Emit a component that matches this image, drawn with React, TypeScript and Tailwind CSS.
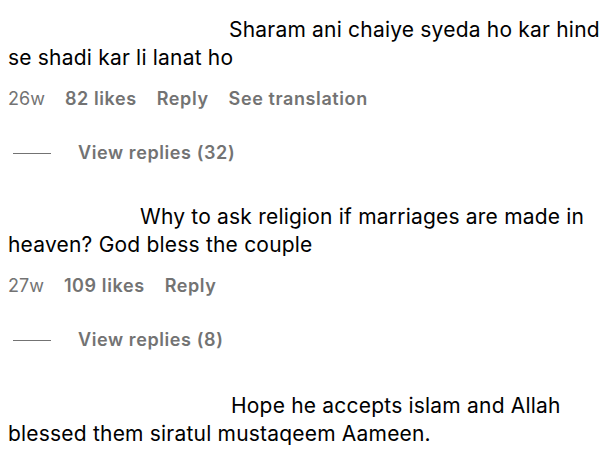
type Comment = {
  indent: number;
  text: string;
  age: string;
  likes: string;
  translate?: boolean;
  replies?: number;
  gapAfter: number;
};

const comments: Comment[] = [
  {
    indent: 221,
    text: 'Sharam ani chaiye syeda ho kar hind se shadi kar li lanat ho',
    age: '26w',
    likes: '82 likes',
    translate: true,
    replies: 32,
    gapAfter: 39,
  },
  {
    indent: 132,
    text: 'Why to ask religion if marriages are made in heaven? God bless the couple',
    age: '27w',
    likes: '109 likes',
    replies: 8,
    gapAfter: 41,
  },
  {
    indent: 223,
    text: 'Hope he accepts islam and Allah blessed them siratul mustaqeem Aameen.',
    age: '',
    likes: '',
    gapAfter: 0,
  },
];

export default function App() {
  return (
    <div
      className="w-[600px] h-[457px] overflow-hidden bg-white pl-2 pt-[16px]"
      style={{ fontFamily: 'Inter, "Liberation Sans", sans-serif' }}
    >
      {comments.map((c, i) => (
        <div key={i} style={{ marginBottom: c.gapAfter }}>
          <p className="text-[21px] leading-[28px] tracking-[0.2px] text-black -mr-1">
            <span className="inline-block" style={{ width: c.indent }} />
            {c.text}
          </p>
          {c.age && (
            <div className="mt-[16px] flex gap-5 text-[18px] leading-[22px] text-[#737373]">
              <span>{c.age}</span>
              <span className="font-semibold tracking-[0.6px]">{c.likes}</span>
              <span className="font-semibold tracking-[0.6px]">Reply</span>
              {c.translate && (
                <span className="font-semibold tracking-[0.6px]">See translation</span>
              )}
            </div>
          )}
          {c.replies !== undefined && (
            <div className="mt-[32px] flex items-center text-[18px] leading-[22px] text-[#737373]">
              <span className="ml-[5px] w-[38px] h-px bg-[#737373]" />
              <span className="ml-[27px] font-semibold tracking-[0.6px]">
                View replies ({c.replies})
              </span>
            </div>
          )}
        </div>
      ))}
    </div>
  );
}
